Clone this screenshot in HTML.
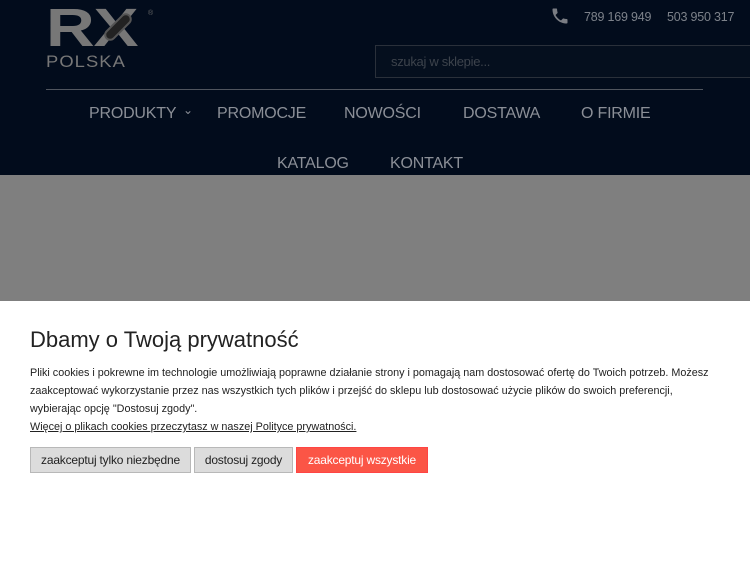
<!DOCTYPE html>
<html><head><meta charset="utf-8"><style>
*{margin:0;padding:0;box-sizing:border-box}
body{width:750px;height:563px;overflow:hidden;background:#fff;font-family:"Liberation Sans",sans-serif;position:relative}
.hdr{position:absolute;left:0;top:0;width:750px;height:175px;background:#020c1c}
.grey{position:absolute;left:0;top:175px;width:750px;height:126px;background:#7f7f7f}
.nav{position:absolute;color:#8b8f97;font-size:16px;top:105px;letter-spacing:-0.2px}
.n2{top:155px}
.logo{position:absolute;left:46px;top:8px}
.ph{position:absolute;top:10px;color:#7d828a;font-size:12.5px;letter-spacing:-0.2px}
.search{position:absolute;left:375px;top:45px;width:380px;height:33px;border:1px solid #2a303a;background:#050f1e;color:#3d434c;font-size:13px;padding:8px 15px;letter-spacing:-0.3px}
.line{position:absolute;left:46px;top:89px;width:657px;height:1px;background:#50555e}
.panel{position:absolute;left:0;top:301px;width:750px;height:262px;background:#fff}
h1{position:absolute;left:30px;top:327px;font-weight:normal;font-size:22px;color:#222}
.txt{position:absolute;left:30px;top:364px;width:720px;font-size:10.8px;line-height:18px;color:#222;white-space:nowrap}
.txt a{color:#222;text-decoration:underline}
.btn{position:absolute;top:447px;height:26px;font-size:12px;line-height:24px;text-align:center;border:1px solid #b8b8b8;background:#dcdcdc;color:#222;letter-spacing:-0.2px}
</style></head><body>
<div class="hdr"></div>
<div class="logo">
<div style="font-size:54px;font-weight:bold;color:#777;line-height:40px;letter-spacing:-1px;transform:scaleX(1.25);transform-origin:left;width:100px">RX</div>
<div style="position:absolute;left:66px;top:2px;width:12px;height:34px;background:#222;border:2px solid #555;transform:rotate(45deg);border-radius:6px"></div>
<div style="position:absolute;left:102px;top:2px;color:#666;font-size:7px">®</div>
<div style="font-size:17px;color:#777;letter-spacing:1px;margin-top:4px;transform:scaleX(1.08);transform-origin:left">POLSKA</div>
</div>
<svg style="position:absolute;left:550px;top:6px" width="20" height="20" viewBox="0 0 24 24"><path fill="#7a7d83" d="M6.6 10.8c1.4 2.8 3.8 5.1 6.6 6.6l2.2-2.2c.3-.3.7-.4 1-.2 1.1.4 2.3.6 3.6.6.6 0 1 .4 1 1V20c0 .6-.4 1-1 1C10.6 21 3 13.4 3 4c0-.6.4-1 1-1h3.5c.6 0 1 .4 1 1 0 1.3.2 2.5.6 3.6.1.3 0 .7-.2 1z"/></svg>
<div class="ph" style="left:584px">789 169 949</div>
<div class="ph" style="left:667px">503 950 317</div>
<div class="search">szukaj w sklepie...</div>
<div class="line"></div>
<div class="nav" style="left:89px">PRODUKTY</div>
<div class="nav" style="left:183px;top:103px;font-size:12px">&#8964;</div>
<div class="nav" style="left:217px">PROMOCJE</div>
<div class="nav" style="left:344px">NOWOŚCI</div>
<div class="nav" style="left:463px">DOSTAWA</div>
<div class="nav" style="left:581px">O FIRMIE</div>
<div class="nav n2" style="left:277px">KATALOG</div>
<div class="nav n2" style="left:390px">KONTAKT</div>
<div class="grey"></div>
<div class="panel"></div>
<h1>Dbamy o Twoją prywatność</h1>
<div class="txt">Pliki cookies i pokrewne im technologie umożliwiają poprawne działanie strony i pomagają nam dostosować ofertę do Twoich potrzeb. Możesz<br>zaakceptować wykorzystanie przez nas wszystkich tych plików i przejść do sklepu lub dostosować użycie plików do swoich preferencji,<br>wybierając opcję "Dostosuj zgody".<br><a>Więcej o plikach cookies przeczytasz w naszej Polityce prywatności.</a></div>
<div class="btn" style="left:30px;width:161px">zaakceptuj tylko niezbędne</div>
<div class="btn" style="left:194px;width:99px">dostosuj zgody</div>
<div class="btn" style="left:296px;width:132px;background:#fb5546;border-color:#f44;color:#fff">zaakceptuj wszystkie</div>
</body></html>
